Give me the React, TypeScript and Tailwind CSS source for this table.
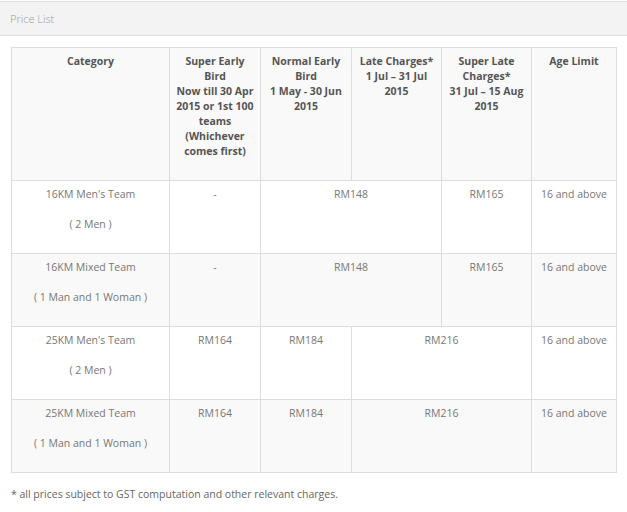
import React from 'react'

const font = { fontFamily: '"Open Sans", "Noto Sans", sans-serif' }

const lines = (arr: string[]) =>
  arr.map((l, i) => (
    <React.Fragment key={i}>
      {l}
      {i < arr.length - 1 && <br />}
    </React.Fragment>
  ))

export default function App() {
  const th = 'border border-[#dddddd] align-top text-center font-bold text-[#555555] pt-[6px] pb-[21px] px-1 whitespace-nowrap'
  const td = 'border border-[#dddddd] align-top text-center text-[#777777] pt-[6px] pb-[20px] px-1 h-[73px] whitespace-nowrap'

  return (
    <div className="w-[627px] h-[512px] bg-white text-[10.5px] leading-[15px]" style={font}>
      {/* Panel heading */}
      <div className="mt-px h-[35px] bg-[#f3f3f3] border-t border-b border-[#dddddd] flex items-center px-[10px] pb-px">
        <span className="text-[11px] text-[#9a9a9a] font-light">Price List</span>
      </div>

      {/* Table */}
      <div className="pl-[11px] pt-[11px]">
        <table className="table-fixed border-collapse w-[605px]">
          <colgroup>
            <col className="w-[158px]" />
            <col className="w-[91px]" />
            <col className="w-[91px]" />
            <col className="w-[90px]" />
            <col className="w-[90px]" />
            <col className="w-[85px]" />
          </colgroup>
          <thead>
            <tr className="bg-[#f9f9f9]">
              <th className={th}>Category</th>
              <th className={th}>
                {lines(['Super Early', 'Bird', 'Now till 30 Apr', '2015 or 1st 100', 'teams', '(Whichever', 'comes first)'])}
              </th>
              <th className={th}>{lines(['Normal Early', 'Bird', '1 May - 30 Jun', '2015'])}</th>
              <th className={th}>{lines(['Late Charges*', '1 Jul – 31 Jul', '2015'])}</th>
              <th className={th}>{lines(['Super Late', 'Charges*', '31 Jul – 15 Aug', '2015'])}</th>
              <th className={th}>Age Limit</th>
            </tr>
          </thead>
          <tbody>
            <tr className="bg-white">
              <td className={td}>
                <p className="mb-[15px]">16KM Men's Team</p>
                <p>( 2 Men )</p>
              </td>
              <td className={td}>-</td>
              <td className={td} colSpan={2}>RM148</td>
              <td className={td}>RM165</td>
              <td className={td}>16 and above</td>
            </tr>
            <tr className="bg-[#f9f9f9]">
              <td className={td}>
                <p className="mb-[15px]">16KM Mixed Team</p>
                <p>( 1 Man and 1 Woman )</p>
              </td>
              <td className={td}>-</td>
              <td className={td} colSpan={2}>RM148</td>
              <td className={td}>RM165</td>
              <td className={td}>16 and above</td>
            </tr>
            <tr className="bg-white">
              <td className={td}>
                <p className="mb-[15px]">25KM Men's Team</p>
                <p>( 2 Men )</p>
              </td>
              <td className={td}>RM164</td>
              <td className={td}>RM184</td>
              <td className={td} colSpan={2}>RM216</td>
              <td className={td}>16 and above</td>
            </tr>
            <tr className="bg-[#f9f9f9]">
              <td className={td}>
                <p className="mb-[15px]">25KM Mixed Team</p>
                <p>( 1 Man and 1 Woman )</p>
              </td>
              <td className={td}>RM164</td>
              <td className={td}>RM184</td>
              <td className={td} colSpan={2}>RM216</td>
              <td className={td}>16 and above</td>
            </tr>
          </tbody>
        </table>
        <p className="mt-[14px] text-[#666666]">* all prices subject to GST computation and other relevant charges.</p>
      </div>
    </div>
  )
}
